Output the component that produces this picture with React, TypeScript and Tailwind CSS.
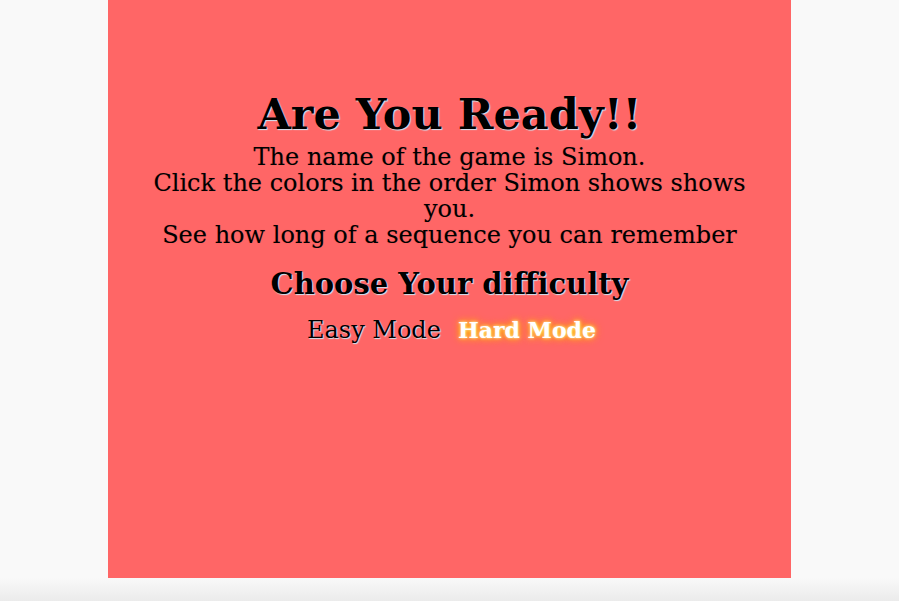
import React from 'react';

const serif = "font-['DejaVu_Serif',serif]";

const App: React.FC = () => {
    return (
        <div className="w-[899px] h-[601px] bg-[#f9f9f9] overflow-hidden flex flex-col">
            <div className="flex flex-1">
                <div className="w-[108px]" />
                <div className={`w-[683px] h-[578px] bg-[#ff6666] flex flex-col items-center pt-[86px] text-black ${serif}`}>
                    <h1 className="text-[43px] leading-[56px] font-bold [text-shadow:1px_1px_1px_#cfe6f5]">
                        Are You Ready!!
                    </h1>

                    <p className="w-[610px] text-center text-[24px] leading-[26px] mt-[2px] [text-shadow:0_0_1px_rgba(0,0,0,0.2)]">
                        The name of the game is Simon.
                        <br />
                        Click the colors in the order Simon shows shows you.
                        <br />
                        See how long of a sequence you can remember
                    </p>

                    <h2 className="text-[29px] leading-[36px] font-bold mt-[18px] [text-shadow:1px_1px_1px_#cfe6f5]">
                        Choose Your difficulty
                    </h2>

                    <div className="flex items-center gap-[17px] mt-[13px] leading-[30px] pl-[4px]">
                        <span className="text-[24px] [text-shadow:1px_1px_1px_#cfe6f5]">Easy Mode</span>
                        <span className="text-[22px] font-bold text-white [text-shadow:0_0_3px_#fff6b0,0_0_6px_#ffd000,0_0_10px_#ff8c00]">Hard Mode</span>
                    </div>
                </div>
            </div>
            <div className="h-[23px] bg-gradient-to-b from-[#f9f9f9] to-[#ebebeb]" />
        </div>
    );
};

export default App;
